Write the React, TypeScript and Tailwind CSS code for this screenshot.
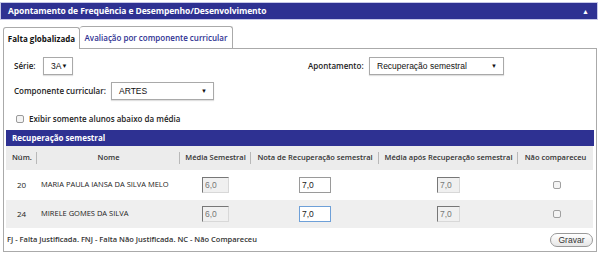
import { useState } from "react";

type Aluno = {
  num: number;
  nome: string;
  media: string;
  nota: string;
  mediaApos: string;
};

const alunos: Array<Aluno> = [
  { num: 20, nome: "MARIA PAULA IANSA DA SILVA MELO", media: "6,0", nota: "7,0", mediaApos: "7,0" },
  { num: 24, nome: "MIRELE GOMES DA SILVA", media: "6,0", nota: "7,0", mediaApos: "7,0" },
];

function Select({ value, className }: { value: string; className: string }) {
  return (
    <div
      className={`flex items-center justify-between h-[18px] border border-[#a9a9a9] bg-white pl-[7px] pr-[6px] text-[8.5px] font-normal text-[#111] whitespace-nowrap shadow-[0_1px_1px_rgba(0,0,0,0.12)] font-['Liberation_Sans',Arial,sans-serif] ${className}`}
    >
      <span>{value}</span>
      <span className="text-[6px]">▼</span>
    </div>
  );
}

function Sep() {
  return <span className="absolute right-0 top-1/2 -translate-y-1/2 h-[12px] w-px bg-[#b8b8b8]" />;
}

export default function App() {
  const [naoCompareceu, setNaoCompareceu] = useState<Array<boolean>>([false, false]);

  return (
    <div className="w-[599px] h-[256px] bg-white font-['Open_Sans',sans-serif] text-[#222] pt-[2px] whitespace-nowrap leading-none">
      <div className="w-[598px] h-[18px] bg-[#2e3192] border border-[#c7c8e8] flex items-center justify-between pl-[7px] pr-[8px]">
        <span className="text-white text-[8.5px] font-bold tracking-[-0.1px]">
          Apontamento de Frequência e Desempenho/Desenvolvimento
        </span>
        <span className="text-white text-[7px]">▲</span>
      </div>

      <div className="ml-[3px] w-[594px] mt-[6px]">
        <div className="flex h-[22px] items-end">
          <div className="h-[22px] w-[77px] border border-b-0 border-[#aaa] rounded-t-[3px] bg-white flex items-center justify-center text-[8px] font-bold text-[#111] relative top-px">
            Falta globalizada
          </div>
          <div className="h-[22px] w-[153px] border border-b-0 border-l-0 border-[#aaa] rounded-t-[3px] bg-white flex items-center justify-center text-[8px] font-semibold text-[#2e3192]">
            Avaliação por componente curricular
          </div>
        </div>

        <div className="h-[204px] border border-[#aaa] px-[2px]">
          <div className="flex items-center h-[18px] mt-[8px] text-[8px] font-semibold">
            <span className="w-[37px] pl-[8px]">Série:</span>
            <Select value="3A" className="w-[30px]" />
            <span className="ml-[235px] w-[61px]">Apontamento:</span>
            <Select value="Recuperação semestral" className="w-[135px]" />
          </div>

          <div className="flex items-center h-[18px] mt-[7px] text-[8px] font-semibold">
            <span className="pl-[8px] w-[105px]">Componente curricular:</span>
            <Select value="ARTES" className="w-[103px]" />
          </div>

          <div className="flex items-center mt-[13px] pl-[10px] gap-[5px] text-[8px] font-semibold h-[12px]">
            <span className="w-[8px] h-[8px] border border-[#9a9a9a] rounded-[2px] bg-[#f4f4f4]" />
            <span>Exibir somente alunos abaixo da média</span>
          </div>

          <div className="mt-[5px] h-[16px] bg-[#2e3192] flex items-center pl-[6px] text-white text-[8px] font-bold">
            Recuperação semestral
          </div>

          <div className="grid grid-cols-[31px_143px_71px_128px_139px_75px] text-[7.5px]">
            <div className="contents font-semibold text-[#333]">
              <div className="relative h-[24px] bg-[#ececec] flex items-center pl-[6px]">
                Núm.
                <Sep />
              </div>
              <div className="relative h-[24px] bg-[#ececec] flex items-center justify-center">
                Nome
                <Sep />
              </div>
              <div className="relative h-[24px] bg-[#ececec] flex items-center justify-center">
                Média Semestral
                <Sep />
              </div>
              <div className="relative h-[24px] bg-[#ececec] flex items-center justify-center">
                Nota de Recuperação semestral
                <Sep />
              </div>
              <div className="relative h-[24px] bg-[#ececec] flex items-center justify-center">
                Média após Recuperação semestral
                <Sep />
              </div>
              <div className="h-[24px] bg-[#ececec] flex items-center justify-center">
                Não compareceu
              </div>
            </div>

            {alunos.map((aluno, i) => {
              const bg = i % 2 === 0 ? "bg-white" : "bg-[#efefef]";
              const h = i % 2 === 0 ? "h-[30px]" : "h-[28px]";
              return (
                <div key={aluno.num} className="contents">
                  <div className={`${bg} ${h} flex items-center justify-center text-[8px]`}>{aluno.num}</div>
                  <div className={`${bg} ${h} flex items-center pl-[4px]`}>{aluno.nome}</div>
                  <div className={`${bg} ${h} flex items-center justify-center`}>
                    <input
                      readOnly
                      value={aluno.media}
                      className="w-[27px] h-[16px] px-[2px] text-[8.5px] text-[#777] bg-[#f0f0f0] border border-[#d8d8d8] border-t-[#777] border-l-[#777] outline-none font-['Liberation_Sans',Arial,sans-serif]"
                    />
                  </div>
                  <div className={`${bg} ${h} flex items-center justify-center`}>
                    <input
                      defaultValue={aluno.nota}
                      className={`w-[32px] h-[16px] px-[2px] text-[8.5px] bg-white border outline-none font-['Liberation_Sans',Arial,sans-serif] ${
                        i === 1 ? "border-[#6ea0d8]" : "border-[#9a9a9a]"
                      }`}
                    />
                  </div>
                  <div className={`${bg} ${h} flex items-center justify-center`}>
                    <input
                      readOnly
                      value={aluno.mediaApos}
                      className="w-[23px] h-[16px] px-[2px] text-[8.5px] text-[#777] bg-[#f0f0f0] border border-[#d8d8d8] border-t-[#777] border-l-[#777] outline-none font-['Liberation_Sans',Arial,sans-serif]"
                    />
                  </div>
                  <div className={`${bg} ${h} flex items-center justify-center`}>
                    <button
                      onClick={() => {
                        const novo = [...naoCompareceu];
                        novo[i] = !novo[i];
                        setNaoCompareceu(novo);
                      }}
                      className="w-[8px] h-[8px] border border-[#a0a0a0] rounded-[2px] bg-[#f4f4f4] ml-[2px]"
                    />
                  </div>
                </div>
              );
            })}
          </div>

          <div className="flex items-center justify-between mt-[5px] pl-[1px] pr-[1px]">
            <span className="text-[7.5px] font-semibold text-[#333]">
              FJ - Falta Justificada. FNJ - Falta Não Justificada. NC - Não Compareceu
            </span>
            <button className="h-[14px] w-[43px] rounded-full border border-[#999] bg-gradient-to-b from-white to-[#e6e6e6] text-[8.5px] text-[#333] font-['Liberation_Sans',Arial,sans-serif] leading-none">
              Gravar
            </button>
          </div>
        </div>
      </div>
    </div>
  );
}
